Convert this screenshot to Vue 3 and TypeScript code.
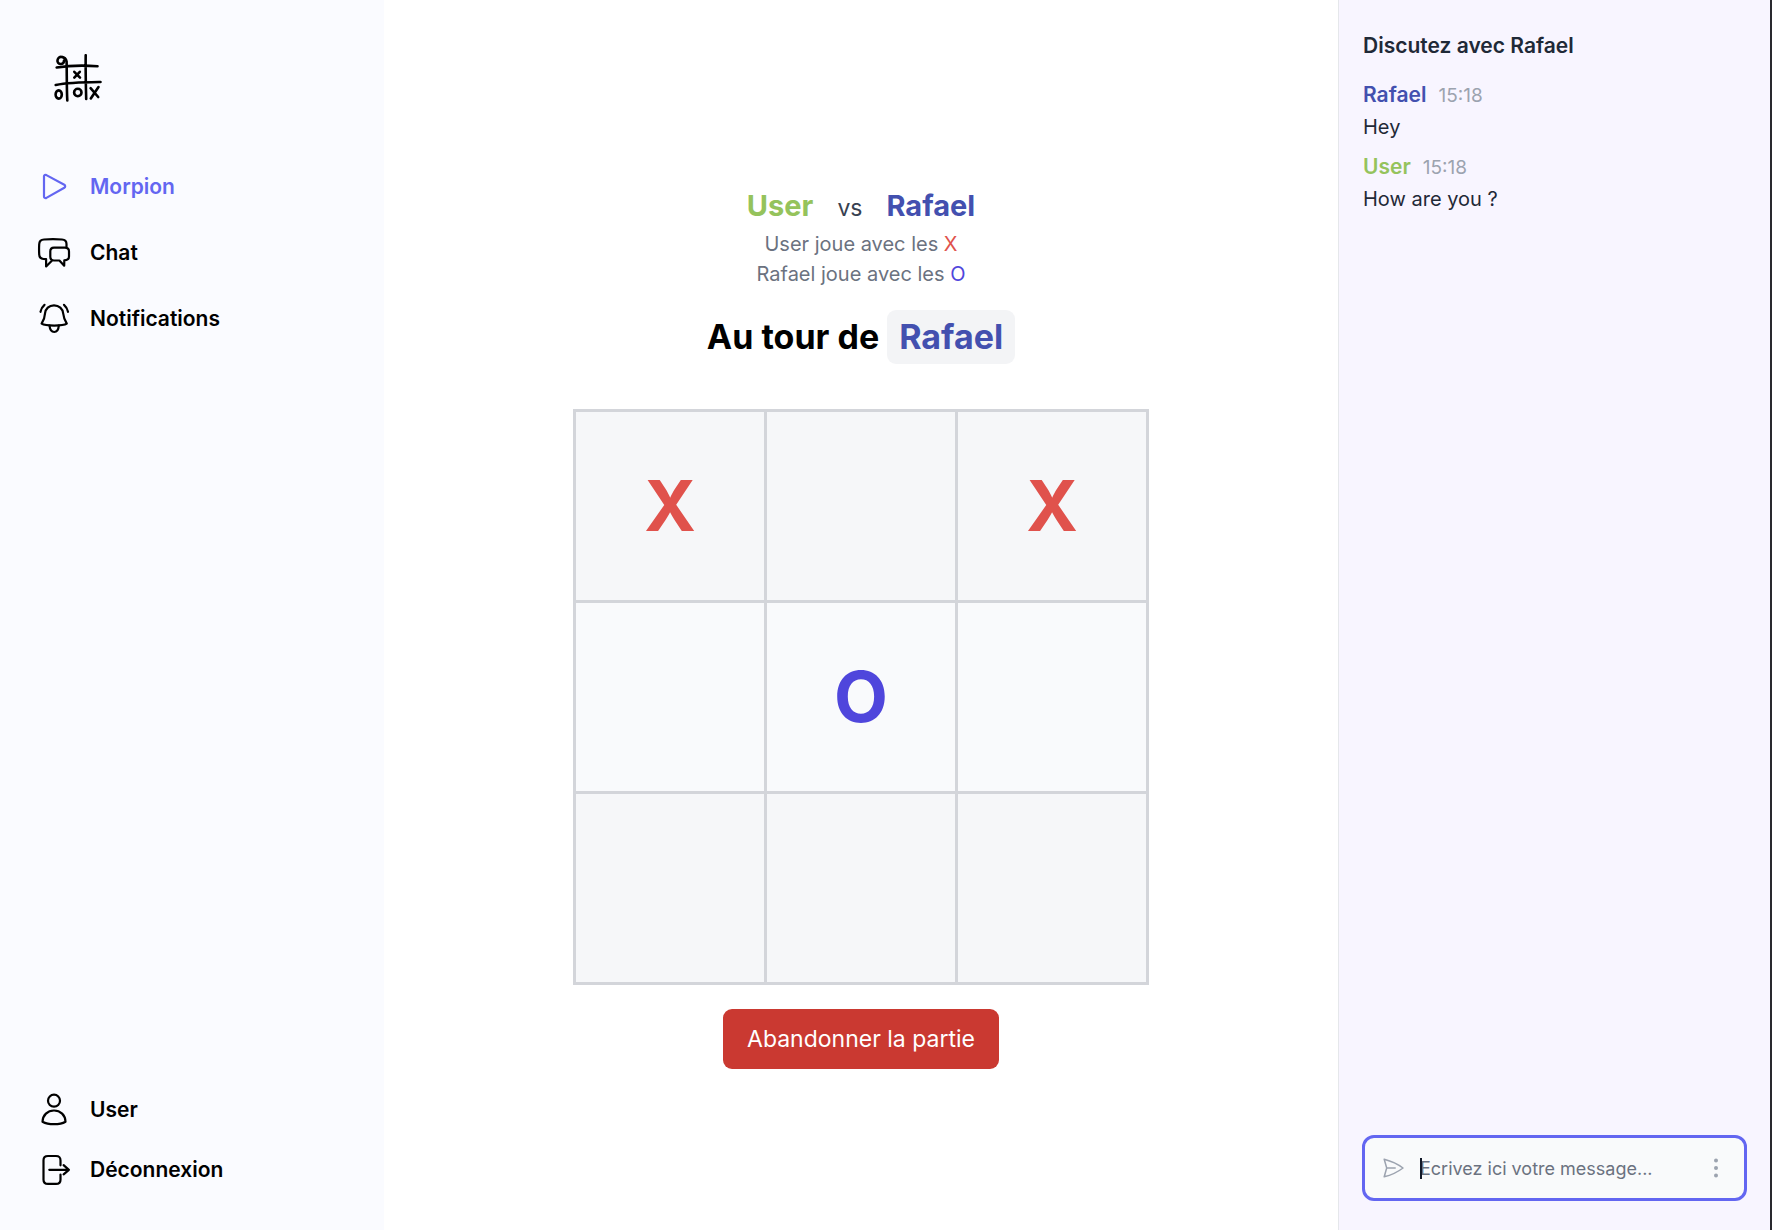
<script setup lang="ts">
import { ref } from 'vue'

type Mark = 'X' | 'O' | ''

interface Player {
  name: string
  tone: string
  mark: Mark
}

interface Message {
  author: Player
  time: string
  text: string
}

const user: Player = { name: 'User', tone: 'green', mark: 'X' }
const rival: Player = { name: 'Rafael', tone: 'blue', mark: 'O' }

const board = ref<Mark[]>(['X', '', 'X', '', 'O', '', '', '', ''])
const current = ref<Player>(rival)
const draft = ref('')

const messages = ref<Message[]>([
  { author: rival, time: '15:18', text: 'Hey' },
  { author: user, time: '15:18', text: 'How are you ?' },
])

function play(index: number) {
  if (board.value[index]) return
  board.value[index] = current.value.mark
  current.value = current.value === rival ? user : rival
}

function send() {
  if (!draft.value.trim()) return
  messages.value.push({ author: user, time: '15:18', text: draft.value })
  draft.value = ''
}
</script>

<template>
  <div class="app">
    <aside class="sidebar">
      <a href="#" class="logo" aria-label="Accueil">
        <svg viewBox="0 0 48 48" width="48" height="48">
          <path d="M10 6.500C10 9 8.500 10.200 6.500 10 4.300 9.800 3.200 8 3.500 6.200 4 3.800 5.800 2.500 7.700 2.900 10 3.300 12 4.800 12.600 7.500 12.900 20 12.600 34 13.300 46.500" />
          <path d="M31.700 1.200C31.500 15 31.800 30 32.200 45M2.700 13.500C15 11.500 29 11.200 43.500 12.200M1.700 31C15 28.300 30 28.200 46.500 28" />
          <path d="M20.300 17.800 26 23.600M25.800 17.800 20.300 23.600M36.600 34.200 44.200 43M44.500 33 36.800 44.500" />
          <ellipse cx="4.700" cy="40.500" rx="3.100" ry="4.100" />
          <circle cx="23.800" cy="38.500" r="3.700" />
        </svg>
      </a>

      <nav class="menu">
        <a href="#morpion" class="item active">
          <svg viewBox="0 0 36 36" width="36" height="36">
            <path d="M8 7.300V27.500c0 1.300 1.200 2 2.400 1.400L28.300 18.700c1.200-.7 1.200-2.200 0-2.900L10.400 6.100C9.200 5.500 8 6 8 7.300Z" />
          </svg>
          <span>Morpion</span>
        </a>
        <a href="#chat" class="item">
          <svg viewBox="0 0 36 36" width="36" height="36">
            <path d="M30.500 12.300V9c0-2.800-1.700-4.300-4.500-4.500-6-.4-12-.4-18 0C4.800 4.700 3.300 6.500 3.200 9.200c-.2 3.500-.2 6.600 0 10.200.1 2.800 1.800 4.300 4.300 4.600l2.600.2v7.300c1.500-1.600 3.700-3.600 5.300-5.200" />
            <path d="M18 12.700h11c2.600.1 4 1.500 4 3.800v5c0 2.400-1.500 3.700-4.700 3.900l-.1 5.300-4.800-5.200H18c-2.300-.1-3.700-1.500-3.700-3.700v-5.500c0-2.300 1.400-3.500 3.700-3.600Z" />
          </svg>
          <span>Chat</span>
        </a>
        <a href="#notifications" class="item">
          <svg viewBox="0 0 36 36" width="36" height="36">
            <path d="M18 4.300c-5 0-8.600 3.400-9 8.200-.2 4.300-.7 6-3.400 10.200 2 1.300 7 1.900 12.600 1.900s10.600-.6 12.600-1.900c-2.600-4.200-3.200-5.900-3.600-10.200-.4-4.800-4.200-8.200-9.200-8.200Z" />
            <path d="M13.500 24.700c.4 4 2 6.300 4.700 6.300s4.300-2.300 4.600-6.300M8.500 3.800C6.500 5.500 5 8 4.500 10.800M28 3.800c2 1.700 3.400 4.200 4 7" />
          </svg>
          <span>Notifications</span>
        </a>
      </nav>

      <nav class="account">
        <a href="#profil" class="item">
          <svg viewBox="0 0 36 36" width="36" height="36">
            <circle cx="18" cy="8.700" r="6" />
            <path d="M18 18.500c-6.500 0-11.200 4.500-11.500 11.200 3 1.700 7 2.500 11.500 2.500s8.700-.8 11.500-2.500C29.300 23 24.500 18.500 18 18.500Z" />
          </svg>
          <span>User</span>
        </a>
        <a href="#deconnexion" class="item">
          <svg viewBox="0 0 36 36" width="36" height="36">
            <path d="M24.500 13.300V8.500c0-3.200-1.400-4.500-4.500-4.500h-8C9 4 7.500 5.300 7.500 8.300v19.400c0 3 1.500 4.200 4.500 4.200h8c3.100 0 4.500-1.200 4.500-4.200v-5.200" />
            <path d="M13.300 17.800h19.400M27.600 13.200l5.300 4.600-5.300 4.600" />
          </svg>
          <span>Déconnexion</span>
        </a>
      </nav>
    </aside>

    <main class="game">
      <div class="versus">
        <strong :class="user.tone">{{ user.name }}</strong>
        <span>vs</span>
        <strong :class="rival.tone">{{ rival.name }}</strong>
      </div>
      <p class="rule">{{ user.name }} joue avec les <span class="x">X</span></p>
      <p class="rule">{{ rival.name }} joue avec les <span class="o">O</span></p>
      <h1 class="turn">
        Au tour de <span class="badge" :class="current.tone">{{ current.name }}</span>
      </h1>
      <div class="board">
        <button
          v-for="(mark, i) in board"
          :key="i"
          type="button"
          class="cell"
          :class="mark.toLowerCase()"
          :aria-label="`Case ${i + 1}`"
          @click="play(i)"
        >{{ mark }}</button>
      </div>
      <button type="button" class="quit">Abandonner la partie</button>
    </main>

    <section class="chat">
      <h2>Discutez avec {{ rival.name }}</h2>
      <ul class="messages">
        <li v-for="(m, i) in messages" :key="i">
          <div class="meta">
            <strong :class="m.author.tone">{{ m.author.name }}</strong>
            <time>{{ m.time }}</time>
          </div>
          <p>{{ m.text }}</p>
        </li>
      </ul>
      <form class="composer" @submit.prevent="send">
        <button type="submit" class="send" aria-label="Envoyer">
          <svg viewBox="0 0 24 24" width="24" height="24">
            <path d="M5.700 12 3.200 3.200C10 5 16.500 7.800 22 12 16.500 16.200 10 19.200 3.200 20.800L5.700 12Zm0 0h8.500" />
          </svg>
        </button>
        <div class="field">
          <input v-model="draft" type="text" aria-label="Message" placeholder="Ecrivez ici votre message..." />
          <span v-if="!draft" class="caret"></span>
        </div>
        <button type="button" class="more" aria-label="Options">
          <svg viewBox="0 0 24 24" width="24" height="24">
            <circle cx="12" cy="4.500" r="2" />
            <circle cx="12" cy="12" r="2" />
            <circle cx="12" cy="19.500" r="2" />
          </svg>
        </button>
      </form>
    </section>
  </div>
</template>

<style>
body {
  margin: 0;
  background: #fff;
}
</style>

<style scoped>
.app {
  display: flex;
  min-height: 100vh;
  font-family: Inter, "Liberation Sans", sans-serif;
  font-size: 21px;
  line-height: 30px;
  color: #1f2937;
}

h1,
h2,
p,
ul {
  margin: 0;
  padding: 0;
}

button,
input {
  margin: 0;
  padding: 0;
  border: 0;
  background: none;
  font: inherit;
  color: inherit;
}

button {
  cursor: pointer;
}

svg {
  display: block;
  flex: none;
  fill: none;
  stroke: currentColor;
  stroke-width: 2.2;
  stroke-linecap: round;
  stroke-linejoin: round;
}

.green {
  color: #95c35c;
}

.blue {
  color: #4350af;
}

.x {
  color: #e0524c;
}

.o {
  color: #4f46dc;
}

.sidebar {
  flex: none;
  width: 384px;
  box-sizing: border-box;
  padding: 54px 36px 36px;
  display: flex;
  flex-direction: column;
  background: #fafbff;
}

.logo {
  align-self: flex-start;
  margin-left: 18px;
  color: #000;
}

.logo svg {
  stroke-width: 2.600;
}

.menu {
  display: flex;
  flex-direction: column;
  gap: 18px;
  margin-top: 61px;
}

.account {
  display: flex;
  flex-direction: column;
  gap: 12px;
  margin-top: auto;
}

.item {
  display: flex;
  align-items: center;
  gap: 18px;
  height: 48px;
  color: #000;
  font-weight: 600;
  text-decoration: none;
}

.item.active {
  color: #6366f1;
}

.game {
  flex: 1;
  display: flex;
  flex-direction: column;
  align-items: center;
  justify-content: center;
  padding-top: 24px;
}

.versus {
  display: flex;
  align-items: baseline;
  gap: 24px;
  line-height: 42px;
  font-size: 23px;
  color: #374151;
}

.versus strong {
  font-size: 29px;
}

.rule {
  font-size: 20px;
  color: #6b7280;
}

.turn {
  margin-top: 21px;
  font-size: 34px;
  line-height: 54px;
  font-weight: 700;
  color: #000;
}

.badge {
  display: inline-block;
  padding: 0 12px;
  border-radius: 9px;
  background: #f3f4f6;
}

.board {
  display: grid;
  grid-template-columns: repeat(3, 188px);
  grid-auto-rows: 188px;
  gap: 3px;
  padding: 3px;
  margin: 45px 0 24px;
  background: #d3d5da;
}

.cell {
  background: #f6f7f9;
  font-size: 70px;
  font-weight: 700;
}

.cell:nth-child(n + 4):nth-child(-n + 6) {
  background: #f9fafc;
}

.quit {
  height: 60px;
  padding: 0 24px;
  border-radius: 9px;
  background: #ca3931;
  color: #fff;
  font-size: 23px;
}

.chat {
  flex: none;
  width: 434px;
  box-sizing: border-box;
  padding: 31px 24px 29px;
  display: flex;
  flex-direction: column;
  border-left: 1px solid #e5e7eb;
  border-right: 2px solid #29292f;
  background: #f8f5ff;
}

.chat h2 {
  font-size: 21px;
  font-weight: 600;
}

.messages {
  flex: 1;
  margin-top: 18px;
  display: flex;
  flex-direction: column;
  gap: 9px;
  list-style: none;
}

.messages p {
  font-size: 20px;
}

.meta {
  display: flex;
  align-items: baseline;
  gap: 12px;
  line-height: 32px;
}

.meta strong {
  font-weight: 600;
}

.meta time {
  font-size: 19px;
  color: #9ca3af;
}

.composer {
  display: flex;
  align-items: center;
  height: 60px;
  margin: 0 -1px;
  padding: 0 16px;
  border: 3px solid #6366f1;
  border-radius: 12px;
  background: #f9fafb;
  color: #9ca3af;
}

.composer svg {
  stroke-width: 1.500;
}

.more circle {
  fill: currentColor;
  stroke: none;
}

.field {
  position: relative;
  flex: 1;
  min-width: 0;
  margin: 0 15px;
}

.field input {
  width: 100%;
  outline: none;
  caret-color: transparent;
  font-size: 18px;
  color: #1f2937;
}

.field input::placeholder {
  color: #6b7280;
  opacity: 1;
}

.caret {
  position: absolute;
  top: 5px;
  left: 0;
  width: 2px;
  height: 21px;
  background: #111827;
}
</style>
